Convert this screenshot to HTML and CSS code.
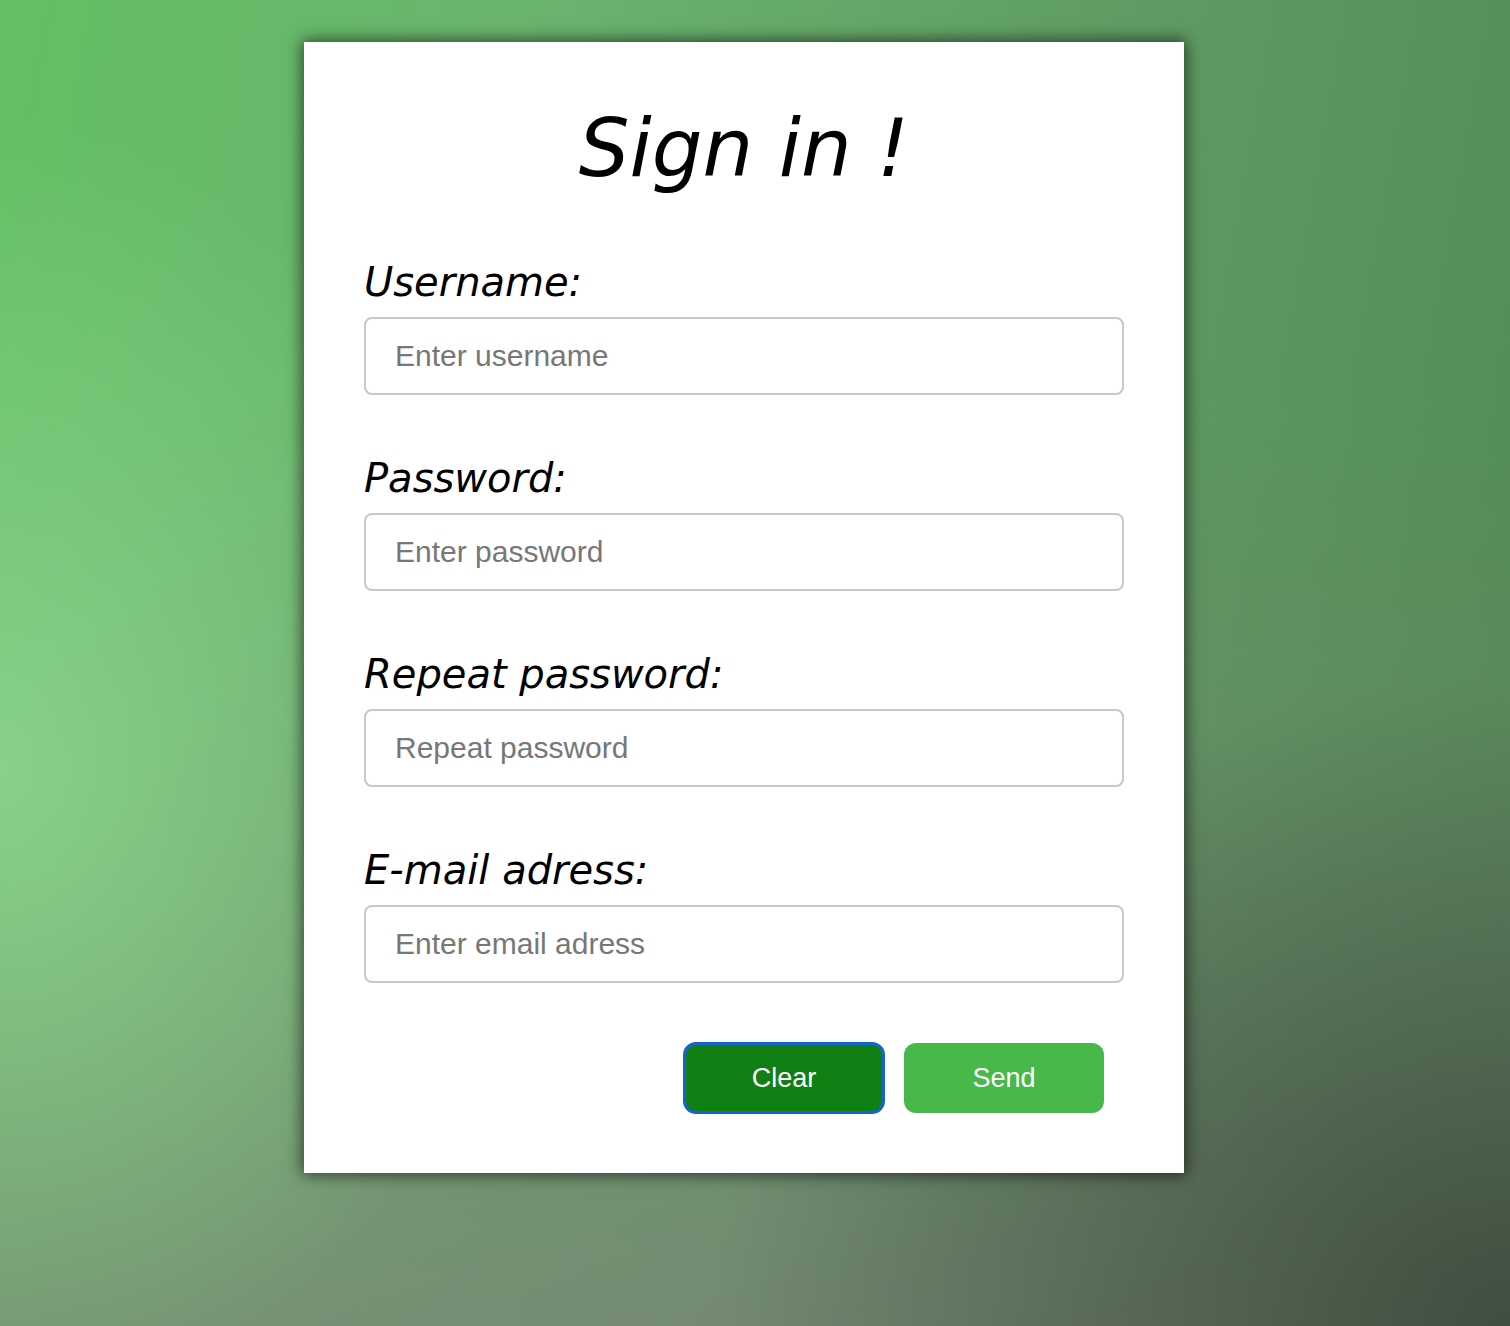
FILE: index.html
```html
<!DOCTYPE html>
<html lang="en">
<head>
  <meta charset="UTF-8" />
  <meta name="viewport" content="width=device-width, initial-scale=1.0" />
  <title>Sign in</title>
  <link rel="stylesheet" href="styles.css">
</head>
<body>
  <div class="card">
    <h1>Sign in !</h1>
    <form>
      <div class="field">
        <label for="username">Username:</label>
        <input type="text" id="username" placeholder="Enter username">
      </div>
      <div class="field">
        <label for="password">Password:</label>
        <input type="password" id="password" placeholder="Enter password">
      </div>
      <div class="field">
        <label for="repeat">Repeat password:</label>
        <input type="password" id="repeat" placeholder="Repeat password">
      </div>
      <div class="field">
        <label for="email">E-mail adress:</label>
        <input type="email" id="email" placeholder="Enter email adress">
      </div>
      <div class="buttons">
        <button type="reset" class="clear focused">Clear</button>
        <button type="submit" class="send">Send</button>
      </div>
    </form>
  </div>
</body>
</html>
```

FILE: styles.css
```css
html, body {
  margin: 0;
  padding: 0;
}
body {
  min-height: 1326px;
  font-family: "DejaVu Sans", sans-serif;
  background:
    radial-gradient(ellipse 520px 650px at 0% 58%, rgba(142, 216, 142, 0.85), rgba(142, 216, 142, 0) 100%),
    radial-gradient(ellipse 800px 650px at 100% 100%, rgba(58, 72, 58, 0.9), rgba(58, 72, 58, 0) 100%),
    linear-gradient(to bottom, rgba(125, 125, 120, 0) 30%, rgba(125, 125, 120, 0.65) 100%),
    linear-gradient(100deg, #62c064 0%, #6bb46e 30%, #5f9c63 65%, #4e8a52 100%);
  overflow: hidden;
}
.card {
  width: 880px;
  box-sizing: border-box;
  margin: 42px 0 0 304px;
  padding: 60px;
  background: white;
  box-shadow: 0 0 15px 2px rgba(0, 0, 0, 0.6);
}
h1 {
  margin: 0 0 64px;
  text-align: center;
  font-size: 80px;
  font-weight: 400;
  font-style: italic;
}
.field {
  margin-bottom: 60px;
}
label {
  display: block;
  font-size: 40px;
  font-style: italic;
  margin-bottom: 12px;
}
input {
  display: block;
  width: 100%;
  height: 78px;
  box-sizing: border-box;
  padding: 0 29px;
  border: 2px solid #c8c8c8;
  border-radius: 8px;
  font-family: "Liberation Sans", Arial, sans-serif;
  font-size: 30px;
  color: #333;
}
input::placeholder {
  color: #777;
}
.buttons {
  display: flex;
  justify-content: flex-end;
  gap: 20px;
  padding-right: 20px;
  margin-top: 2px;
}
button {
  width: 200px;
  height: 70px;
  border: none;
  border-radius: 12px;
  font-family: "Liberation Sans", Arial, sans-serif;
  font-size: 27px;
  color: white;
  cursor: pointer;
}
.clear {
  background: #108015;
}
.focused {
  outline: 3px solid #1463d2;
  outline-offset: -2px;
}
.send {
  background: #48b84a;
}
```
